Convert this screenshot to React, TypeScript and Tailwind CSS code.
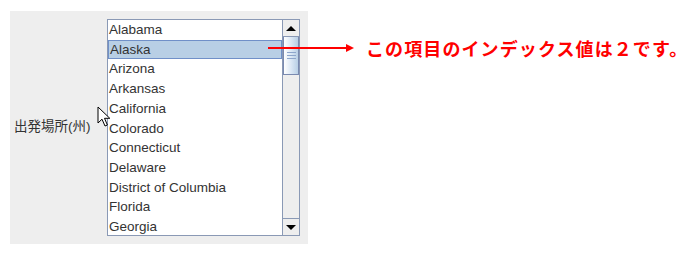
const states = [
  "Alabama",
  "Alaska",
  "Arizona",
  "Arkansas",
  "California",
  "Colorado",
  "Connecticut",
  "Delaware",
  "District of Columbia",
  "Florida",
  "Georgia",
];

function Cursor() {
  return (
    <svg className="absolute left-[97px] top-[106px]" width="14" height="22" viewBox="0 0 14 22">
      <path
        d="M1 1 L1 17 L5 13.2 L8 20 L10.4 19 L7.5 12.3 L12.8 12.3 Z"
        fill="#ffffff"
        stroke="#000000"
        strokeWidth="1"
        strokeLinejoin="miter"
      />
    </svg>
  );
}

function ScrollBar() {
  return (
    <div className="flex w-[17px] flex-col border-l border-[#8a99b5] bg-[#eeeeee]">
      <div className="flex h-[17px] items-center justify-center border-b border-[#8a99b5] bg-[#eeeeee]">
        <div className="h-0 w-0 border-x-[5px] border-b-[5px] border-x-transparent border-b-black" />
      </div>
      <div className="flex h-[38px] items-center justify-center border-x border-b border-[#7a8ab0] bg-gradient-to-r from-[#ffffff] via-[#dce8f5] to-[#b8cfe5]">
        <div className="flex w-[9px] flex-col gap-[2px]">
          <div className="h-px bg-[#8ea6cc]" />
          <div className="h-px bg-[#8ea6cc]" />
          <div className="h-px bg-[#8ea6cc]" />
        </div>
      </div>
      <div className="flex-1" />
      <div className="flex h-[17px] items-center justify-center border-t border-[#8a99b5] bg-[#eeeeee]">
        <div className="h-0 w-0 border-x-[5px] border-t-[5px] border-x-transparent border-t-black" />
      </div>
    </div>
  );
}

export default function App() {
  return (
    <main className="relative h-[257px] w-[689px] bg-white font-['Liberation_Sans','Noto_Sans_CJK_JP',sans-serif]">
      <div className="absolute left-[10px] top-[11px]">
        <div className="flex h-[233px] w-[298px] items-center bg-[#eeeeee] pl-[4px]">
          <span className="w-[93px] font-['Liberation_Sans','Noto_Sans_CJK_JP',sans-serif] text-[13.5px] text-[#333333]">
            出発場所(州)
          </span>
          <div className="flex h-[217px] w-[193px] border border-[#8a99b5] bg-white">
            <div className="flex-1 overflow-hidden">
              {states.map((s) => (
                <div
                  key={s}
                  className={`flex h-[19.7px] items-center pl-px text-[13.5px] leading-none text-[#333333] ${
                    s === "Alaska" ? "border border-[#7090c8] bg-[#b8cfe5] pl-0" : ""
                  }`}
                >
                  {s}
                </div>
              ))}
            </div>
            <ScrollBar />
          </div>
        </div>
      </div>

      <Cursor />

      <div className="absolute left-[268px] top-[39px] flex items-center">
        <div className="h-[2px] w-[78px] bg-[#ff0000]" />
        <div className="h-0 w-0 border-y-[4px] border-l-[8px] border-y-transparent border-l-[#ff0000]" />
        <span className="ml-[12px] font-['Noto_Sans_CJK_JP',sans-serif] text-[18px] font-bold leading-none tracking-[1.1px] text-[#ff0000]">
          この項目のインデックス値は２です。
        </span>
      </div>
    </main>
  );
}
